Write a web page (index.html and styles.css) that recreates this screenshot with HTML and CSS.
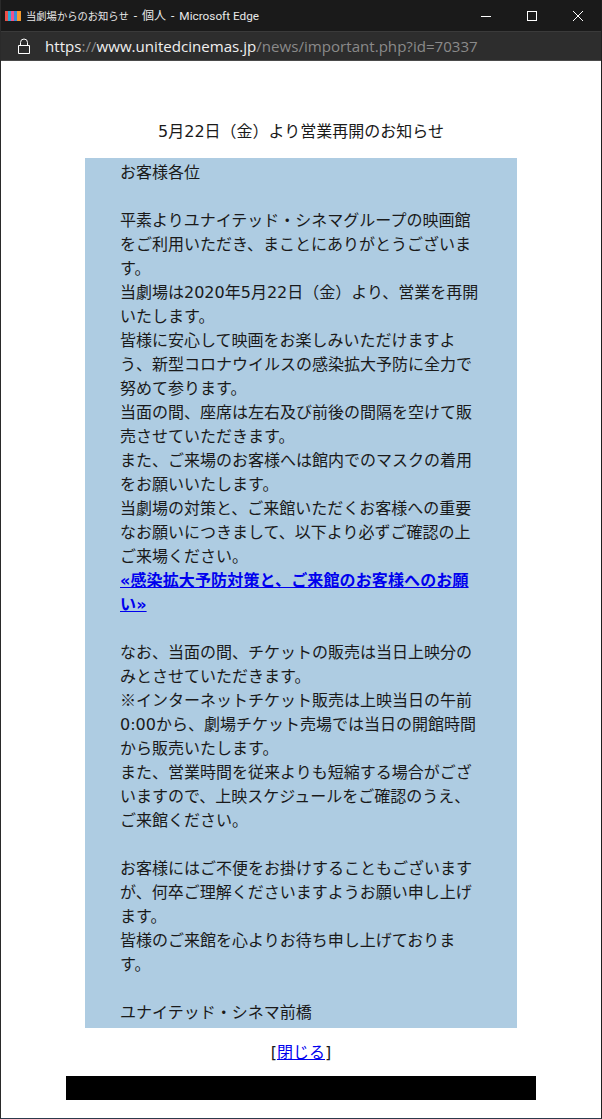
FILE: index.html
```html
<!DOCTYPE html>
<html lang="ja">
<head>
<meta charset="utf-8">
<title>当劇場からのお知らせ - 個人 - Microsoft Edge</title>
<link rel="stylesheet" href="styles.css">
</head>
<body>
<div class="window">
  <header class="titlebar">
    <svg class="favicon" width="16" height="10" viewBox="0 0 16 10">
      <rect width="3" height="10" fill="#e9504a"/><rect x="3" width="3" height="10" fill="#28a8d8"/>
      <rect x="6" width="3" height="10" fill="#f0508c"/><rect x="9" width="3" height="10" fill="#3a8ad8"/>
      <rect x="12" width="4" height="10" fill="#f59a2e"/>
    </svg>
    <span class="title"><span class="ja-name">当劇場からのお知らせ</span> - <span class="ja-profile">個人</span> - <span class="product">Microsoft Edge</span></span>
    <div class="controls">
      <svg width="10" height="10" viewBox="0 0 10 10"><path d="M0 5.5H10" stroke="#fff" fill="none"/></svg>
      <svg width="10" height="10" viewBox="0 0 10 10"><rect x=".5" y=".5" width="9" height="9" stroke="#fff" fill="none"/></svg>
      <svg width="10" height="10" viewBox="0 0 10 10"><path d="M0 0L10 10M10 0L0 10" stroke="#fff" fill="none"/></svg>
    </div>
  </header>
  <div class="addressbar">
    <svg class="lock" width="14" height="17" viewBox="0 0 14 17"><path d="M1.5 7.5h11v8h-11zM3.5 7.5V4.5a3.5 3.5 0 0 1 7 0v3" stroke="#fff" fill="none"/></svg>
    <span class="url"><span class="host">https</span><span class="dim">://</span><span class="host">www.unitedcinemas.jp</span><span class="dim">/news/important.php?id=70337</span></span>
  </div>
  <main class="page">
    <h1 class="heading">5月22日（金）より営業再開のお知らせ</h1>
    <section class="notice">
      <div class="notice-text">お客様各位<br><br>平素よりユナイテッド・シネマグループの映画館をご利用いただき、まことにありがとうございます。<br>当劇場は2020年5月22日（金）より、営業を再開いたします。<br>皆様に安心して映画をお楽しみいただけますよう、新型コロナウイルスの感染拡大予防に全力で努めて参ります。<br>当面の間、座席は左右及び前後の間隔を空けて販売させていただきます。<br>また、ご来場のお客様へは館内でのマスクの着用をお願いいたします。<br>当劇場の対策と、ご来館いただくお客様への重要なお願いにつきまして、以下より必ずご確認の上ご来場ください。<br><a class="strong-link" href="#">«感染拡大予防対策と、ご来館のお客様へのお願い»</a><br><br>なお、当面の間、チケットの販売は当日上映分のみとさせていただきます。<br><span class="cjk">※</span>インターネットチケット販売は上映当日の午前0:00から、劇場チケット売場では当日の開館時間から販売いたします。<br>また、営業時間を従来よりも短縮する場合がございますので、上映スケジュールをご確認のうえ、ご来館ください。<br><br>お客様にはご不便をお掛けすることもございますが、何卒ご理解くださいますようお願い申し上げます。<br>皆様のご来館を心よりお待ち申し上げております。<br><br>ユナイテッド・シネマ前橋</div>
    </section>
    <p class="close">[<a href="#">閉じる</a>]</p>
    <div class="blackbar"></div>
  </main>
</div>
</body>
</html>
```
FILE: styles.css
```css
html, body { margin: 0; padding: 0; height: 100%; }
body { background: #fff; color: #1a1a1a; font-family: "DejaVu Sans", "Noto Sans CJK JP", sans-serif; font-size: 16px; font-weight: 400; line-height: 24px; overflow: hidden; }
.window { width: 602px; height: 1119px; box-sizing: border-box; display: flex; flex-direction: column; border-left: 1px solid #2a2a2a; border-right: 1px solid #1f1f1f; border-bottom: 1px solid #2c3a4c; }
.titlebar { height: 31px; flex: none; background: #1a1a1a; color: #e8e8e8; display: flex; align-items: center; padding-left: 4px; font-family: Roboto, "Noto Sans CJK JP", sans-serif; font-size: 12px; font-weight: 400; }
.favicon { flex: none; }
.title { margin-left: 5px; padding-top: 2px; white-space: nowrap; word-spacing: 2px; }
.ja-name { font-size: 10.3px; }
.ja-profile { font-size: 12px; }
.product { font-size: 11.8px; word-spacing: 0; }
.controls { margin-left: auto; display: flex; align-items: center; gap: 36px; padding-right: 18px; }
.addressbar { height: 30px; flex: none; background: #2d2d2d; border-top: 1px solid #3a3a3a; border-bottom: 1px solid #4a4a4a; box-sizing: border-box; display: flex; align-items: center; padding-left: 16px; }
.lock { flex: none; }
.url { margin-left: 14px; font-size: 15.1px; font-family: "Open Sans", "Noto Sans", sans-serif; font-weight: 400; white-space: nowrap; }
.dim { color: #8a8a8a; }
.host { color: #f0f0f0; }
.page { flex: 1; display: flex; flex-direction: column; align-items: center; padding-top: 59px; }
.heading { margin: 0; font-size: 16px; font-weight: 400; line-height: 24px; }
.notice { width: 432px; box-sizing: border-box; margin-top: 14px; padding: 3px 35px 3px; background: #aecce2; line-break: strict; }
.notice-text { display: block; }
.cjk { font-family: "Noto Sans CJK JP", sans-serif; line-height: 0; }
a { color: #0000ee; }
.strong-link { font-weight: 700; letter-spacing: .13px; }
.close { margin: 13px 0 0; }
.blackbar { width: 470px; height: 24px; margin-top: 11px; background: #000; flex: none; }
```
